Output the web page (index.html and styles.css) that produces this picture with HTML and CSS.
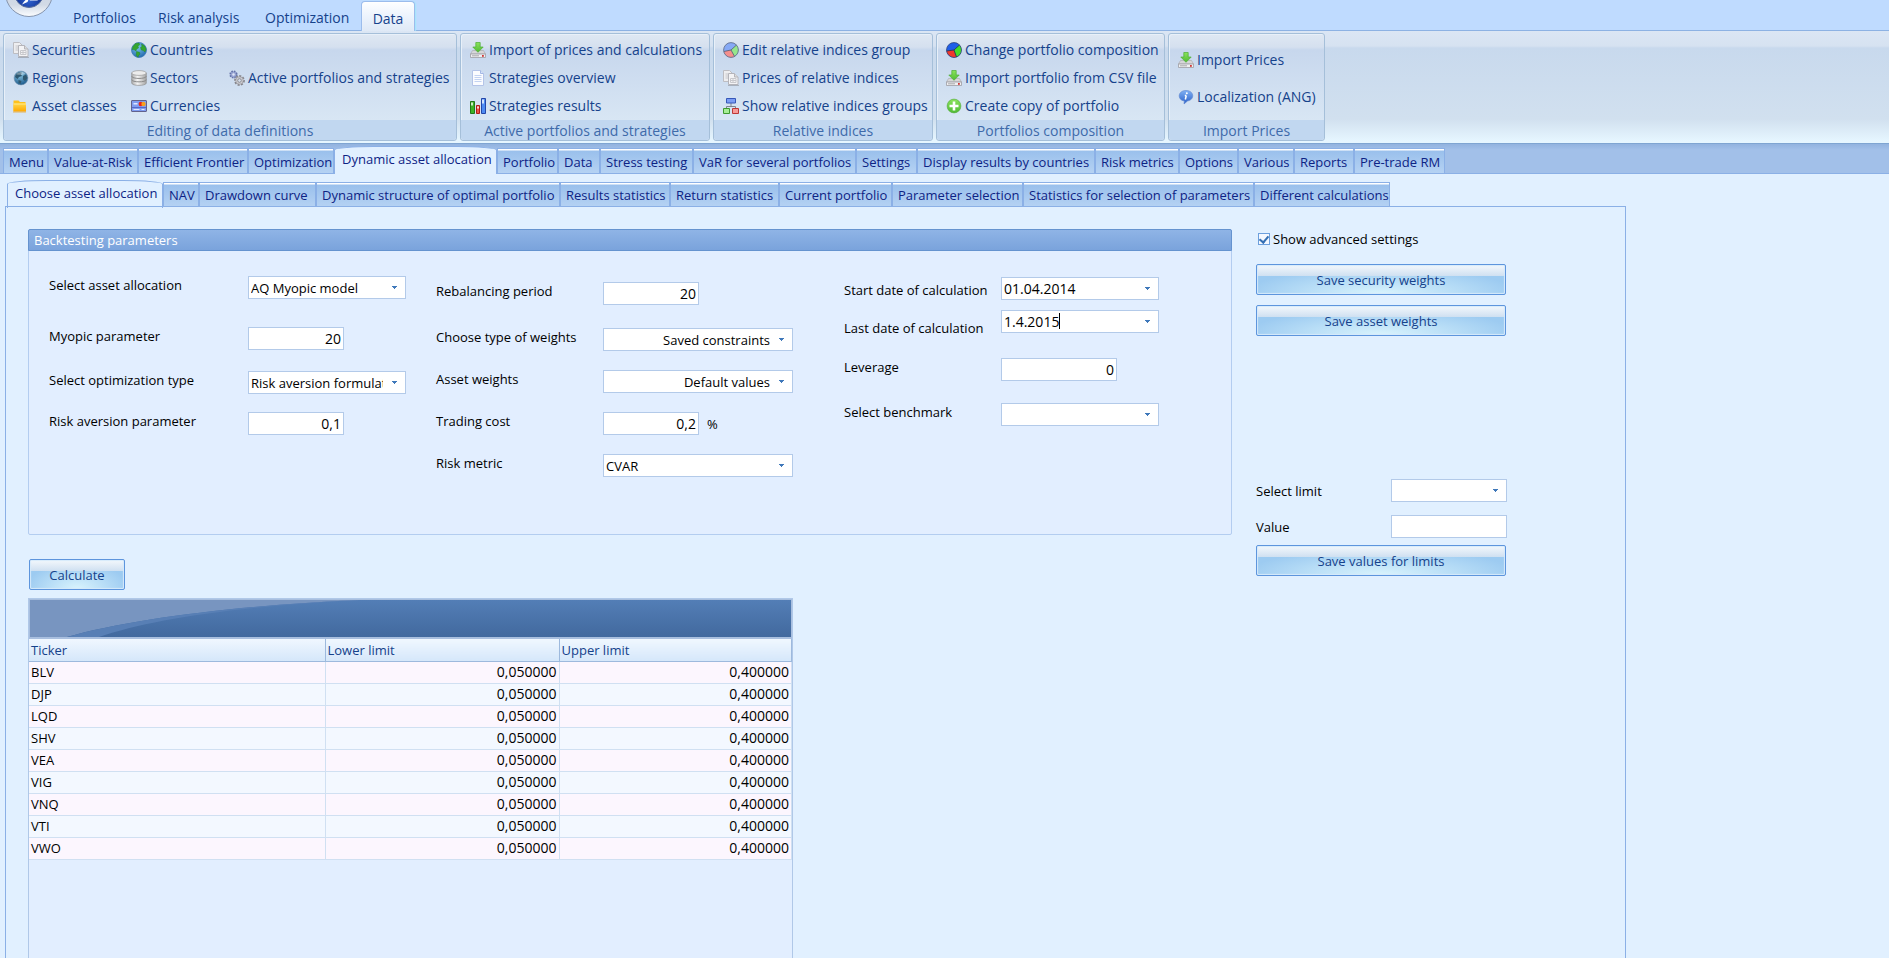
FILE: index.html
```html
<!DOCTYPE html>
<html lang="en">
<head>
<meta charset="utf-8">
<title>Dynamic asset allocation</title>
<link rel="stylesheet" href="styles.css">
</head>
<body>
<svg class="defs" aria-hidden="true">
  <defs>
    <linearGradient id="gGreen" x1="0" y1="0" x2="0" y2="1"><stop offset="0" stop-color="#8be35c"/><stop offset="1" stop-color="#4fba34"/></linearGradient>
    <linearGradient id="gYellow" x1="0" y1="0" x2="0" y2="1"><stop offset="0" stop-color="#ffd84a"/><stop offset="1" stop-color="#ffa800"/></linearGradient>
    <linearGradient id="gSilver" x1="0" y1="0" x2="1" y2="0"><stop offset="0" stop-color="#aaa"/><stop offset=".4" stop-color="#f4f4f4"/><stop offset="1" stop-color="#a4a4a4"/></linearGradient>
    <linearGradient id="gBlue" x1="0" y1="0" x2="0" y2="1"><stop offset="0" stop-color="#7fb0f4"/><stop offset="1" stop-color="#2a5fc8"/></linearGradient>
    <radialGradient id="gSea" cx=".4" cy=".3" r=".8"><stop offset="0" stop-color="#7cc8ee"/><stop offset="1" stop-color="#1a5fa8"/></radialGradient>
    <radialGradient id="gDark" cx=".4" cy=".25" r=".8"><stop offset="0" stop-color="#8fcbe6"/><stop offset="1" stop-color="#145488"/></radialGradient>
    <radialGradient id="gOrb" cx=".5" cy=".75" r=".6"><stop offset="0" stop-color="#2f62d0"/><stop offset="1" stop-color="#0b2480"/></radialGradient>
    <linearGradient id="gRing" x1="0" y1="0" x2="0" y2="1"><stop offset="0" stop-color="#c4d0e2"/><stop offset=".75" stop-color="#d2dae6"/><stop offset="1" stop-color="#fbfdff"/></linearGradient>
  </defs>
  <symbol id="i-pages" viewBox="0 0 16 16">
    <path d="M.5.500h6l2.500 2.500v8.500h-8.500z" fill="#eeeef0" stroke="#bdbdc2"/><path d="M2.500 4h3M2.500 6h3M2.500 8h3" stroke="#c6c6ca"/>
    <path d="M5.500 3.500h6l3.500 3.500v7.500h-9.500z" fill="#f3f3f5" stroke="#b4b4ba"/><path d="M11.500 3.500v3.500h3.500" fill="#ddd" stroke="#b4b4ba"/><path d="M7.500 8.500h5.500v4h-5.500zM10 8.500v4M7.500 10.500h5.500" fill="none" stroke="#c8c8cc"/><path d="M5 15.500h11" stroke="#8f949c" opacity=".6"/>
  </symbol>
  <symbol id="i-earth" viewBox="0 0 16 16">
    <circle cx="8" cy="8" r="7.500" fill="url(#gSea)" stroke="#3f7db8" stroke-width=".8"/>
    <path d="M2 4.500L4.500 1.500 8 1l.8 1.600L7 4.300 7.600 6 5.500 7 5 9 3 7.600 1 7.500zM10.500 2l3 1.800L15.200 7 14 10l-1.700-1.500L10.300 8 9.500 5.500 11 4.400zM5.500 9.500l3 .8L9 12l-1.500 1.500L7 15.300l-1.800-2z" fill="#35a52f" stroke="#23841f" stroke-width=".4"/>
  </symbol>
  <symbol id="i-region" viewBox="0 0 16 16">
    <circle cx="8" cy="8" r="6.900" fill="url(#gDark)" stroke="#6b8ba8" stroke-width=".6"/>
    <path d="M3 4l3-2 3 .5-1 2 1 1.500-3 1-1.500 2L2 7zM10 6l3-1.500L14.500 8 12 11l-2-1.500zM5.500 10l3 1-1 3-2-1z" fill="#2e5870"/><path d="M3 4.500c2-3 7-3.500 9.500-1-2 2-6 1-9.500 1z" fill="#fff" opacity=".35"/>
  </symbol>
  <symbol id="i-folder" viewBox="0 0 16 16">
    <path d="M.500 2.500h5l1.500 1.500h5.500v9h-12z" fill="#ffc21c"/><path d="M.500 5.500h12.500v8h-12.500z" fill="url(#gYellow)"/><path d="M.500 6h12.500" stroke="#ffe78a"/><path d="M0 14h13" stroke="#e9a11a" opacity=".7"/>
  </symbol>
  <symbol id="i-db" viewBox="0 0 16 16">
    <path d="M.7 3v10c0 3.200 14.600 3.200 14.600 0v-10z" fill="url(#gSilver)" stroke="#909090" stroke-width=".7"/><ellipse cx="8" cy="3" rx="7.300" ry="2.400" fill="#ececec" stroke="#999" stroke-width=".7"/>
    <path d="M.7 6.200c0 3 14.600 3 14.600 0M.7 9.600c0 3 14.600 3 14.600 0" fill="none" stroke="#8b8b8b"/>
  </symbol>
  <symbol id="i-card" viewBox="0 0 16 16">
    <rect x=".500" y="2.500" width="15" height="11" rx=".5" fill="#7f9cf0" stroke="#62628c"/><path d="M1 9.500h14" stroke="#5668c8"/><path d="M2.500 6.500h4v-1.500h-4z" fill="#dfe6ff"/><circle cx="9.800" cy="6" r="2.200" fill="#e8261c"/><circle cx="12.500" cy="6" r="2.200" fill="#f7a11e"/><path d="M2.500 11.500h6M10.500 11.500h3" stroke="#e4e9ff"/>
  </symbol>
  <symbol id="i-gears" viewBox="0 0 16 16">
    <circle cx="4.500" cy="4.500" r="3.300" fill="#98a6d4" stroke="#6472a8" stroke-width="1.600" stroke-dasharray="1.500 1.100"/><circle cx="4.500" cy="4.500" r="1.200" fill="#dfe5f6"/>
    <circle cx="10.500" cy="10.500" r="4.500" fill="#cfcfd4" stroke="#85858c" stroke-width="1.800" stroke-dasharray="2 1.400"/><circle cx="10.500" cy="10.500" r="3.700" fill="#cdcdd2" stroke="#97979d" stroke-width=".6"/><circle cx="10.500" cy="10.500" r="1.800" fill="#d6e0ee" stroke="#7e7e84" stroke-width=".8"/>
  </symbol>
  <symbol id="i-import" viewBox="0 0 16 16">
    <path d="M2.500 8.500h11l2 3.500h-15z" fill="#d6d6d8" stroke="#adadb2" stroke-width=".7"/><path d="M.500 12h15v3.500h-15z" fill="#efeff1" stroke="#9d9da3" stroke-width=".8"/><path d="M2 13.800h7" stroke="#a8a8ac"/><rect x="12" y="13" width="1.800" height="1.800" fill="#d03434"/>
    <path d="M5.800.5h4.400v4.500h3L8 10.300 2.800 5h3z" fill="url(#gGreen)" stroke="#4cae34" stroke-width=".7"/>
  </symbol>
  <symbol id="i-doc" viewBox="0 0 16 16">
    <path d="M2.500.5h8l3 3v12h-11z" fill="#fbfcff" stroke="#b4c4e8"/><path d="M10.500.5v3h3" fill="#d8e4fa" stroke="#a4b8e4"/><path d="M4.500 5.500h7M4.500 7.500h7M4.500 9.500h7M4.500 11.500h7" stroke="#c3d3f2"/>
  </symbol>
  <symbol id="i-bars" viewBox="0 0 16 16">
    <path d="M.500 3.500h4v12h-4z" fill="#3db327" stroke="#23771a"/><path d="M6.500 7.500h3v8h-3z" fill="#f05048" stroke="#b01c18"/><path d="M11.500.500h4v15h-4z" fill="#4f8cf2" stroke="#2346a8"/><path d="M2 4.500v3M8 8.500v2M13 1.500v4" stroke="#fff" stroke-width="1.500"/>
  </symbol>
  <symbol id="i-pie" viewBox="0 0 16 16">
    <circle cx="8" cy="8" r="7.400" fill="#86a9f5"/><path d="M8 8L.8 9.500A7.400 7.400 0 0 0 11.500 14.500z" fill="#f58f8d"/><path d="M8 8l3.500 6.500A7.400 7.400 0 0 0 13.500 3z" fill="#96e68c"/><path d="M8 8L.8 9.500M8 8l3.500 6.400M8 8l5.500-5" stroke="#555c70" stroke-width=".8"/><circle cx="8" cy="8" r="7.400" fill="none" stroke="#5c6884" stroke-width=".8"/>
  </symbol>
  <symbol id="i-pie2" viewBox="0 0 16 16">
    <circle cx="8" cy="8" r="7.500" fill="#1f5ee8"/><path d="M8 8L.6 9A7.500 7.500 0 0 0 10.500 15z" fill="#f0382c"/><path d="M8 8l2.500 7A7.500 7.500 0 0 0 13.500 3z" fill="#46dc28"/><path d="M8 8L.5 9M8 8l2.500 7M8 8l5.500-5" stroke="#203050" stroke-width=".8"/><circle cx="8" cy="8" r="7.500" fill="none" stroke="#2a3c70" stroke-width=".7"/>
  </symbol>
  <symbol id="i-tree" viewBox="0 0 16 16">
    <path d="M8 5v4M3.500 10.500v-2h9v2" fill="none" stroke="#7c8390"/><path d="M3.500.5h9v4.500h-9z" fill="#7a9cf4" stroke="#3557b8"/><path d="M.500 10.500h6v5h-6z" fill="#a6ee96" stroke="#3e9a30"/><path d="M9.500 10.500h6v5h-6z" fill="#f79a98" stroke="#bc3836"/>
  </symbol>
  <symbol id="i-plus" viewBox="0 0 16 16">
    <circle cx="8" cy="8" r="6.900" fill="url(#gGreen)" stroke="#56a83e" stroke-width=".6"/><path d="M8 3.500v9M3.500 8h9" stroke="#fff" stroke-width="2.600"/>
  </symbol>
  <symbol id="i-info" viewBox="0 0 16 16">
    <path d="M8 1.500c8.500 0 9 9.500 1.500 10.500L6 15l.3-3C-1 11-.500 1.500 8 1.500z" fill="url(#gBlue)" stroke="#5f87cc" stroke-width=".6"/><path d="M8.300 6.500L7.300 10.500M6.800 6.500h1.500" stroke="#fff" stroke-width="1.500"/><circle cx="8.800" cy="4.200" r="1" fill="#fff"/>
  </symbol>
</svg>

<header class="ribbon-top">
  <button class="orb" type="button" aria-label="Application menu">
    <svg viewBox="0 0 48 18" width="48" height="18" aria-hidden="true"><circle cx="24" cy="-7" r="23.500" fill="url(#gRing)" stroke="#8695ae"/><circle cx="24" cy="-7" r="14.500" fill="url(#gOrb)" stroke="#5b6f9c"/><path d="M17 4.500C19 1 21-1 24-1.500L22.500 2zM24-1h7l2 1.500h-8z" fill="#fff"/></svg>
  </button>
  <nav class="menu-tabs">
    <a class="menu-tab" href="#">Portfolios</a>
    <a class="menu-tab" href="#">Risk analysis</a>
    <a class="menu-tab" href="#">Optimization</a>
    <a class="menu-tab active" href="#">Data</a>
  </nav>
</header>

<section class="ribbon">
  <div class="group g1">
    <div class="items cols">
      <div class="col">
        <button class="cmd" type="button"><svg><use href="#i-pages"/></svg>Securities</button>
        <button class="cmd" type="button"><svg><use href="#i-region"/></svg>Regions</button>
        <button class="cmd" type="button"><svg><use href="#i-folder"/></svg>Asset classes</button>
      </div>
      <div class="col">
        <button class="cmd" type="button"><svg><use href="#i-earth"/></svg>Countries</button>
        <button class="cmd" type="button"><svg><use href="#i-db"/></svg>Sectors</button>
        <button class="cmd" type="button"><svg><use href="#i-card"/></svg>Currencies</button>
      </div>
      <div class="col middle">
        <button class="cmd" type="button"><svg><use href="#i-gears"/></svg>Active portfolios and strategies</button>
      </div>
    </div>
    <div class="caption">Editing of data definitions</div>
  </div>
  <div class="group g2">
    <div class="items col">
      <button class="cmd" type="button"><svg><use href="#i-import"/></svg>Import of prices and calculations</button>
      <button class="cmd" type="button"><svg><use href="#i-doc"/></svg>Strategies overview</button>
      <button class="cmd" type="button"><svg><use href="#i-bars"/></svg>Strategies results</button>
    </div>
    <div class="caption">Active portfolios and strategies</div>
  </div>
  <div class="group g3">
    <div class="items col">
      <button class="cmd" type="button"><svg><use href="#i-pie"/></svg>Edit relative indices group</button>
      <button class="cmd" type="button"><svg><use href="#i-pages"/></svg>Prices of relative indices</button>
      <button class="cmd" type="button"><svg><use href="#i-tree"/></svg>Show relative indices groups</button>
    </div>
    <div class="caption">Relative indices</div>
  </div>
  <div class="group g4">
    <div class="items col">
      <button class="cmd" type="button"><svg><use href="#i-pie2"/></svg>Change portfolio composition</button>
      <button class="cmd" type="button"><svg><use href="#i-import"/></svg>Import portfolio from CSV file</button>
      <button class="cmd" type="button"><svg><use href="#i-plus"/></svg>Create copy of portfolio</button>
    </div>
    <div class="caption">Portfolios composition</div>
  </div>
  <div class="group g5">
    <div class="items col spread">
      <button class="cmd" type="button"><svg><use href="#i-import"/></svg>Import Prices</button>
      <button class="cmd" type="button"><svg><use href="#i-info"/></svg>Localization (ANG)</button>
    </div>
    <div class="caption">Import Prices</div>
  </div>
</section>

<nav class="strip main-strip">
  <a class="tab" href="#">Menu</a><a class="tab" href="#">Value-at-Risk</a><a class="tab" href="#">Efficient Frontier</a><a class="tab" href="#">Optimization</a><a class="tab active" href="#">Dynamic asset allocation</a><a class="tab" href="#">Portfolio</a><a class="tab" href="#">Data</a><a class="tab" href="#">Stress testing</a><a class="tab" href="#">VaR for several portfolios</a><a class="tab" href="#">Settings</a><a class="tab" href="#">Display results by countries</a><a class="tab" href="#">Risk metrics</a><a class="tab" href="#">Options</a><a class="tab" href="#">Various</a><a class="tab" href="#">Reports</a><a class="tab" href="#">Pre-trade RM</a>
</nav>

<main class="workspace">
  <nav class="strip sub-strip">
    <a class="tab active" href="#">Choose asset allocation</a><a class="tab" href="#">NAV</a><a class="tab" href="#">Drawdown curve</a><a class="tab" href="#">Dynamic structure of optimal portfolio</a><a class="tab" href="#">Results statistics</a><a class="tab" href="#">Return statistics</a><a class="tab" href="#">Current portfolio</a><a class="tab" href="#">Parameter selection</a><a class="tab" href="#">Statistics for selection of parameters</a><a class="tab" href="#">Different calculations</a>
  </nav>
  <div class="page">
    <div class="left">
      <section class="panel">
        <h2 class="panel-title">Backtesting parameters</h2>
        <div class="panel-body">
          <div class="fields f1">
            <label for="alloc">Select asset allocation</label>
            <select id="alloc" class="box drop"><option>AQ Myopic model</option></select>
            <label for="myopic">Myopic parameter</label>
            <input id="myopic" class="box num" value="20">
            <label for="opt">Select optimization type</label>
            <select id="opt" class="box drop"><option>Risk aversion formulation</option></select>
            <label for="aversion">Risk aversion parameter</label>
            <input id="aversion" class="box num" value="0,1">
          </div>
          <div class="fields f2">
            <label for="rebal">Rebalancing period</label>
            <input id="rebal" class="box num" value="20">
            <label for="wtype">Choose type of weights</label>
            <select id="wtype" class="box drop right"><option>Saved constraints</option></select>
            <label for="aweights">Asset weights</label>
            <select id="aweights" class="box drop right"><option>Default values</option></select>
            <label for="cost">Trading cost</label>
            <div class="unit"><input id="cost" class="box num" value="0,2"><span>%</span></div>
            <label for="metric">Risk metric</label>
            <select id="metric" class="box drop"><option>CVAR</option></select>
          </div>
          <div class="fields f3">
            <label class="low" for="start">Start date of calculation</label>
            <input id="start" class="box drop date" value="01.04.2014">
            <label class="lower" for="last">Last date of calculation</label>
            <div class="editing"><input id="last" class="box drop date" value="1.4.2015"><span class="caret"></span></div>
            <label for="lev">Leverage</label>
            <input id="lev" class="box num wide" value="0">
            <label for="bench">Select benchmark</label>
            <select id="bench" class="box drop"><option></option></select>
          </div>
        </div>
      </section>
      <button class="btn calc" type="button">Calculate</button>
      <div class="grid">
        <div class="banner"><svg viewBox="0 0 330 37" width="330" height="37" aria-hidden="true"><path d="M0 0H330C210 5 100 19 37 37H0z" fill="#7895c0"/><path d="M330 0C210 5 100 19 37 37H69C120 20 200 7 330 0z" fill="#587fb5"/></svg></div>
        <table class="limits">
          <colgroup><col class="c-ticker"><col class="c-lower"><col></colgroup>
          <thead><tr><th>Ticker</th><th>Lower limit</th><th>Upper limit</th></tr></thead>
          <tbody>
            <tr><td>BLV</td><td>0,050000</td><td>0,400000</td></tr>
            <tr><td>DJP</td><td>0,050000</td><td>0,400000</td></tr>
            <tr><td>LQD</td><td>0,050000</td><td>0,400000</td></tr>
            <tr><td>SHV</td><td>0,050000</td><td>0,400000</td></tr>
            <tr><td>VEA</td><td>0,050000</td><td>0,400000</td></tr>
            <tr><td>VIG</td><td>0,050000</td><td>0,400000</td></tr>
            <tr><td>VNQ</td><td>0,050000</td><td>0,400000</td></tr>
            <tr><td>VTI</td><td>0,050000</td><td>0,400000</td></tr>
            <tr><td>VWO</td><td>0,050000</td><td>0,400000</td></tr>
          </tbody>
        </table>
      </div>
    </div>
    <aside class="side">
      <label class="check"><input type="checkbox" checked>Show advanced settings</label>
      <button class="btn" type="button">Save security weights</button>
      <button class="btn" type="button">Save asset weights</button>
      <div class="limit-form">
        <label for="limit">Select limit</label>
        <select id="limit" class="box drop"><option></option></select>
        <label for="value">Value</label>
        <input id="value" class="box">
      </div>
      <button class="btn" type="button">Save values for limits</button>
    </aside>
  </div>
</main>
</body>
</html>
```
FILE: styles.css
```css
* { box-sizing: border-box; }

body {
  margin: 0;
  height: 100vh;
  overflow: hidden;
  display: flex;
  flex-direction: column;
  background: #e1f0ff;
  color: #000;
  font: 13px/18px "Open Sans", "Noto Sans", sans-serif;
}

button, input, select { font: inherit; color: inherit; margin: 0; }
a { color: inherit; text-decoration: none; }
.defs { position: absolute; width: 0; height: 0; }

/* Application menu */
.ribbon-top {
  flex: none;
  display: flex;
  height: 31px;
  padding-left: 5px;
  background: #bfdbff;
  border-bottom: 1px solid #8db2e3;
}
.orb { width: 50px; height: 18px; padding: 0; border: 0; background: none; display: flex; }
.menu-tabs { display: flex; margin-left: 6px; align-items: flex-end; font-size: 14px; color: #15428b; white-space: nowrap; }
.menu-tab { padding-left: 12px; height: 30px; line-height: 36px; }
.menu-tab:nth-child(1) { width: 85px; }
.menu-tab:nth-child(2) { width: 107px; }
.menu-tab:nth-child(3) { width: 108px; }
.menu-tab.active {
  width: 54px;
  padding: 0;
  margin-bottom: -1px;
  line-height: 33px;
  text-align: center;
  border: 1px solid #9bbcec;
  border-bottom: 0;
  border-radius: 4px 4px 0 0;
  background: linear-gradient(#fdfeff, #ecf3fd 50%, #dfe9f6);
  box-shadow: inset 0 1px 1px #fff, 1px 0 1px #a6e6fb;
}

/* Ribbon */
.ribbon {
  flex: none;
  display: flex;
  gap: 3px;
  height: 113px;
  padding: 2px 3px;
  background: linear-gradient(#dbe6f4, #d6e2f1 15px, #c8d9ed 17px, #d1e0ef 88px, #e6f6ff 110px);
  border-bottom: 1px solid #7fa5d2;
  color: #15428b;
  font-size: 14px;
}
.group {
  display: flex;
  flex-direction: column;
  border: 1px solid #a5bfd9;
  border-radius: 3px;
  background: linear-gradient(#dfe8f3, #d5e0ef 13px, #c7d7ed 16px, #d8e6f4 86px);
  box-shadow: inset 1px 1px 0 #e8f0f9;
}
.g1 { width: 454px; }
.g2 { width: 250px; }
.g3 { width: 220px; }
.g4 { width: 229px; }
.g5 { width: 157px; }
.items { flex: 1; padding: 2px 0 0 9px; }
.cols { display: flex; }
.cols .col:nth-child(1) { width: 118px; }
.cols .col:nth-child(2) { width: 98px; }
.col { display: flex; flex-direction: column; align-items: flex-start; }
.col.middle { padding-top: 28px; }
.col.spread { padding-top: 12px; gap: 9px; }
.cmd {
  display: flex;
  align-items: center;
  gap: 3px;
  height: 28px;
  padding: 0;
  border: 0;
  background: none;
  white-space: nowrap;
}
.cmd svg { width: 16px; height: 16px; flex: none; }
.caption {
  height: 20px;
  line-height: 21px;
  text-align: center;
  color: #3e6aaa;
  background: #c1d7f0;
  border-radius: 0 0 3px 3px;
}

/* Tab strips */
.strip { flex: none; display: grid; align-items: end; color: #0d2384; }
.main-strip {
  height: 30px;
  padding-left: 3px;
  background: linear-gradient(#92b3df, #a2c0e9 6px);
  border-bottom: 1px solid #8bb0e6;
  grid-template-columns: 45px 90px 110px 86px 163px 61px 42px 93px 163px 61px 178px 84px 59px 56px 60px 91px;
}
.sub-strip {
  padding-left: 2px;
  height: 26px;
  grid-template-columns: 156px 36px 117px 244px 110px 109px 113px 131px 231px 136px;
}
.tab {
  height: 25px;
  padding-left: 5px;
  line-height: 26px;
  white-space: nowrap;
  border: 1px solid #8bb0e6;
  border-bottom: 0;
  background: linear-gradient(#fff, #fff 1px, #9ac0ec 2px, #b5d2f3);
}
.sub-strip .tab { line-height: 25px; }
.strip .tab.active {
  height: 28px;
  margin-bottom: -1px;
  padding-left: 7px;
  line-height: 25px;
  background: #e1f0ff;
  border-radius: 40px 40px 0 0 / 4px 4px 0 0;
}

/* Work area */
.workspace { flex: 1; min-height: 0; display: flex; flex-direction: column; padding: 6px 263px 0 5px; }
.page {
  flex: 1;
  min-height: 0;
  display: flex;
  gap: 24px;
  padding: 22px 118px 0 22px;
  border: 1px solid #8bb0e6;
  border-bottom: 0;
}
.left { flex: 1; min-width: 0; display: flex; flex-direction: column; align-items: flex-start; }

.panel { width: 100%; height: 306px; border: 1px solid #b3cdf0; border-radius: 2px; background: #e2eeff; }
.panel-title {
  margin: -1px -1px 0;
  height: 22px;
  padding-left: 5px;
  border: 1px solid #6593cf;
  border-radius: 2px 2px 0 0;
  background: linear-gradient(#8fb4e6, #7aa3dc);
  color: #fff;
  font-size: 13px;
  font-weight: 400;
  line-height: 21px;
}
.panel-body { display: flex; padding-left: 20px; }
.fields { display: grid; justify-items: start; align-items: start; }
.f1 { width: 387px; grid-template-columns: 199px 158px; grid-template-rows: 51px 44px 41px 23px; padding-top: 25px; }
.f2 { width: 408px; grid-template-columns: 167px 190px; grid-template-rows: 46px 42px 42px 42px 23px; padding-top: 31px; }
.f3 { grid-template-columns: 157px 158px; grid-template-rows: 33px 48px 45px 23px; padding-top: 26px; }
.low { padding-top: 4px; }
.lower { padding-top: 9px; }

.box {
  width: 100%;
  height: 23px;
  padding: 0 2px;
  border: 1px solid #b3cae9;
  border-radius: 0;
  background-color: #fff;
  outline: 0;
}
.num { width: 96px; text-align: right; font-size: 14px; }
.num.wide { width: 116px; }
.date { font-size: 14px; }
.drop {
  appearance: none;
  padding-right: 22px;
  white-space: nowrap;
  background-image: linear-gradient(#3f78ba, #3f78ba), linear-gradient(#3f78ba, #3f78ba), linear-gradient(#3f78ba, #3f78ba);
  background-size: 5px 1px, 3px 1px, 1px 1px;
  background-position: right 8px top 9px, right 9px top 10px, right 10px top 11px;
  background-repeat: no-repeat;
}
.right { text-align: right; text-align-last: right; }
.unit { display: flex; align-items: center; gap: 8px; }
.editing { position: relative; width: 100%; }
.caret { position: absolute; left: 58px; top: 3px; width: 1px; height: 16px; background: #000; }

.btn {
  height: 31px;
  padding: 0;
  border: 1px solid #5d95dd;
  border-radius: 2px;
  color: #15428b;
  background:
    linear-gradient(#f4f8fc, #cfe0f1 11px, transparent 11px),
    radial-gradient(ellipse 55% 90% at 50% 100%, #d9f4fd, #9dcbf1);
  box-shadow: inset 0 0 1px 1px #d6eafb;
}
.calc { width: 96px; margin: 24px 0 8px 1px; flex: none; }

/* Limits grid */
.grid { width: 765px; flex: 1; min-height: 0; border: 1px solid #b0c8e8; border-bottom: 0; background: #e2eeff; }
.banner {
  height: 40px;
  border: solid #a9bfdf;
  border-width: 1px 1px 2px;
  background: linear-gradient(#537eb6, #42699e);
}
.banner svg { display: block; }
.limits { width: 100%; border-collapse: collapse; table-layout: fixed; }
.c-ticker { width: 296px; }
.c-lower { width: 234px; }
.limits th, .limits td { height: 22px; padding: 0 2px; line-height: 20px; text-align: left; font-weight: 400; }
.limits th {
  border-right: 1px solid #9db9dd;
  border-bottom: 1px solid #9db9dd;
  background: linear-gradient(#f0f7ff, #d5e7fa);
  color: #15428b;
}
.limits td { border-right: 1px solid #d0e0f2; border-bottom: 1px solid #d0e0f2; }
.limits td + td { text-align: right; font-size: 14px; }
.limits tbody tr:nth-child(odd) { background: #fcf6fe; }
.limits tbody tr:nth-child(even) { background: #f3f8ff; }

/* Side settings */
.side { width: 251px; flex: none; display: flex; flex-direction: column; }
.side .btn { width: 250px; flex: none; }
.check { display: flex; align-items: center; gap: 3px; height: 20px; margin-bottom: 15px; padding-left: 2px; }
.check input {
  appearance: none;
  width: 12px;
  height: 12px;
  border: 1px solid #6c9fdd;
  background: #f4f8ff;
  display: grid;
  place-items: center;
}
.check input:checked::before {
  content: "";
  width: 4px;
  height: 7px;
  margin-bottom: 2px;
  border: solid #3570b4;
  border-width: 0 2px 2px 0;
  transform: rotate(40deg);
}
.side .btn + .btn { margin-top: 10px; }
.limit-form { display: grid; grid-template-columns: 135px 116px; row-gap: 13px; align-items: center; margin: 143px 0 7px; }
```
